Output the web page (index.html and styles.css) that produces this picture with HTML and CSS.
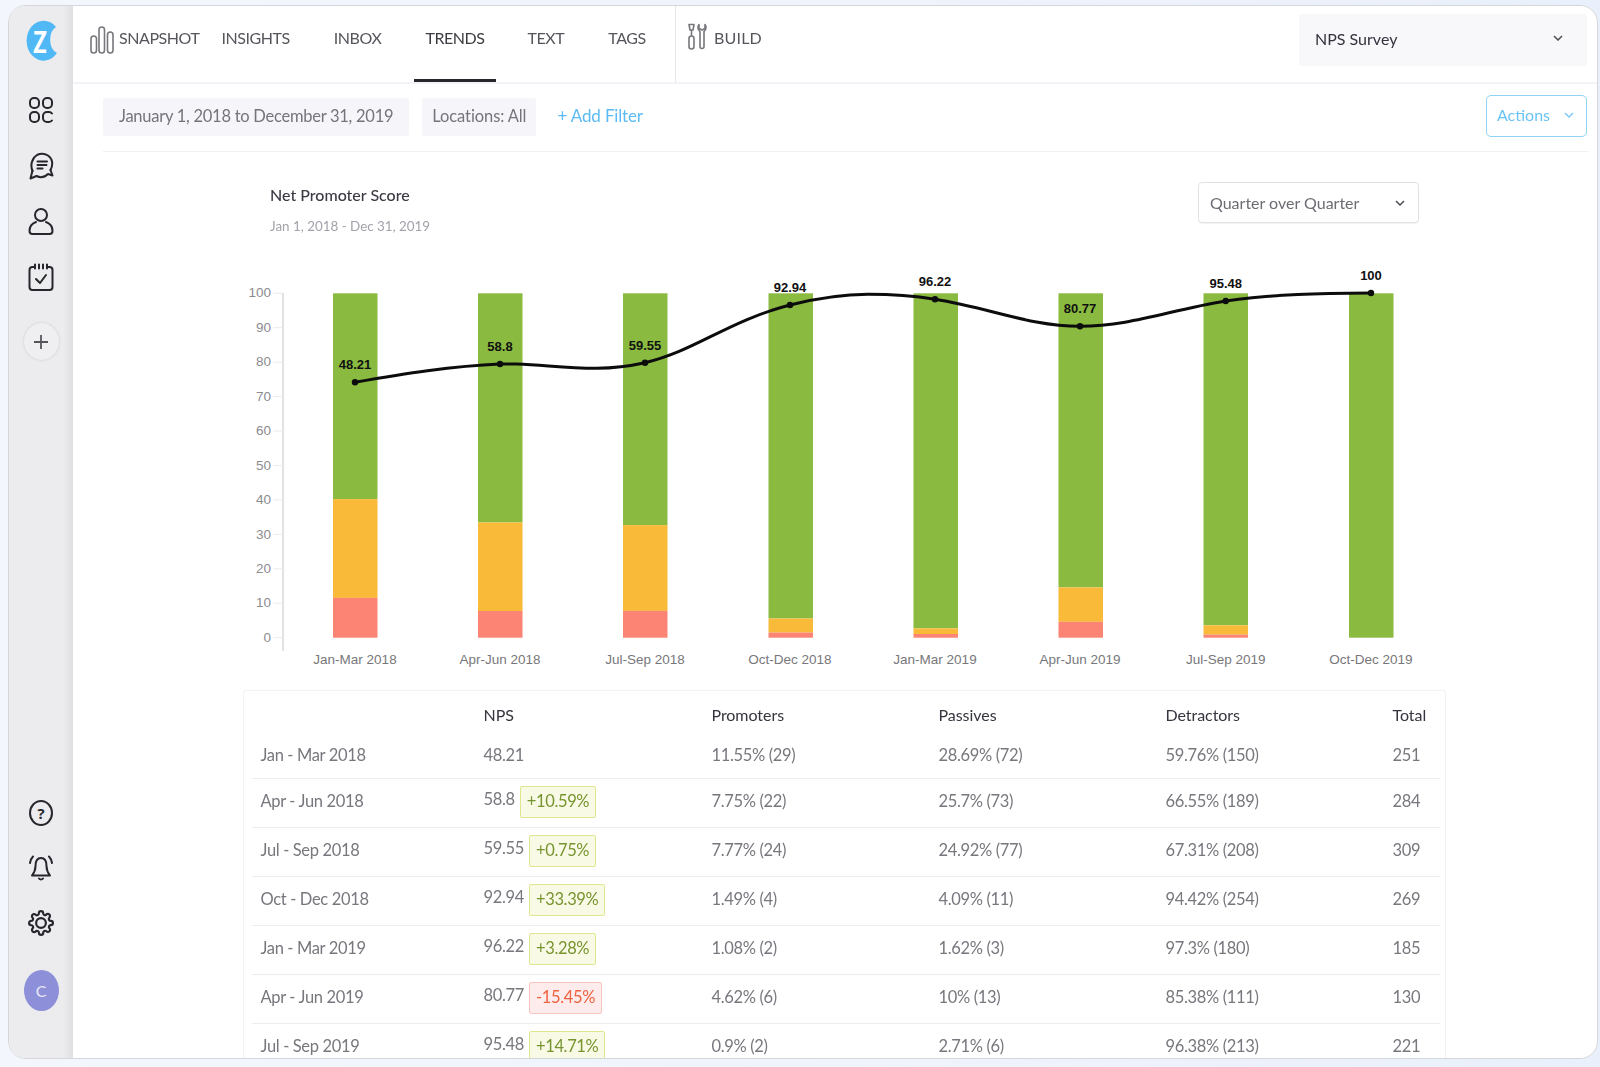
FILE: index.html
```html
<!DOCTYPE html>
<html lang="en">
<head>
<meta charset="utf-8">
<title>NPS Trends</title>
<link rel="stylesheet" href="styles.css">
</head>
<body>
<div class="window">
  <aside class="sidebar">
    <svg class="logo" viewBox="0 0 36 42" width="36" height="42">
      <path class="logo-c" d="M32 7A10 14 0 0 0 33 33A17 20 0 1 1 32 7Z"/>
      <text class="logo-z" transform="translate(16 33) scale(.72 1)" text-anchor="middle">Z</text>
    </svg>
    <div class="side-top">
      <svg class="ico" viewBox="0 0 26 28" width="26" height="28"><rect x="2" y="2" width="9" height="10" rx="4"/><rect x="15" y="2" width="9" height="10" rx="4"/><rect x="2" y="16" width="9" height="10" rx="4"/><path d="M24 17.500A4 4 0 0 0 21 16h-2a4 4 0 0 0-4 4v2a4 4 0 0 0 4 4h2a4 4 0 0 0 3-1.500"/></svg>
      <svg class="ico" viewBox="0 0 26 28" width="26" height="28"><path d="M4.500 19C2 13 4 6 9 3C15 0 22.500 3 24 9.500C24.500 12.500 24 15.500 22.500 18"/><path d="M4.500 18.500L2.500 26.500L8.500 24C12.500 26 17 25 20 22L24.500 23.500L22.500 18"/><path d="M9.500 9.500h9.500M9.500 13h9M9.500 16.500h5"/></svg>
      <svg class="ico" viewBox="0 0 26 28" width="26" height="28"><circle cx="13" cy="8" r="6"/><path d="M8 15C4 16.500 1.500 20 1.500 24Q1.500 27 4.500 27H21.500Q24.500 27 24.500 24C24.500 20 22 16.500 18 15"/></svg>
      <svg class="ico" viewBox="0 0 26 28" width="26" height="28"><path d="M19 4h2.500A3 3 0 0 1 24.500 7v17a3 3 0 0 1-3 3h-17a3 3 0 0 1-3-3V7a3 3 0 0 1 3-3H7"/><path d="M7 1.500v4M11 1.500v4M15 1.500v4M19 1.500v4"/><path d="M8 16l4 4 6-8"/></svg>
    </div>
    <div class="plus">
      <svg class="ico-thin" viewBox="0 0 16 16" width="16" height="16"><path d="M8 1v14M1 8h14"/></svg>
    </div>
    <div class="side-bottom">
      <div class="help"><span class="help-mark">?</span></div>
      <svg class="ico" viewBox="0 0 26 28" width="26" height="28"><path d="M13 4C8.500 4 7.500 8 7.500 12C7.500 17 6 19 4 21.500H22C20 19 18.500 17 18.500 12C18.500 8 17.500 4 13 4Z"/><path d="M11 24.500a2.500 2.500 0 0 0 4 0"/><path d="M5 2.500C3.500 4 2.500 6 2 9M21 2.500C22.500 4 23.500 6 24 9"/></svg>
      <svg class="ico" viewBox="0 0 24 24" width="26" height="26"><circle cx="12" cy="12" r="4.500"/><path d="M19.400 15a1.650 1.650 0 0 0 .33 1.820l.06.06a2 2 0 0 1 0 2.830 2 2 0 0 1-2.830 0l-.06-.06a1.650 1.650 0 0 0-1.820-.33 1.650 1.650 0 0 0-1 1.510V21a2 2 0 0 1-2 2 2 2 0 0 1-2-2v-.09A1.650 1.650 0 0 0 9 19.400a1.650 1.650 0 0 0-1.820.33l-.06.06a2 2 0 0 1-2.830 0 2 2 0 0 1 0-2.830l.06-.06a1.650 1.650 0 0 0 .33-1.820 1.650 1.650 0 0 0-1.510-1H3a2 2 0 0 1-2-2 2 2 0 0 1 2-2h.09A1.650 1.650 0 0 0 4.600 9a1.650 1.650 0 0 0-.33-1.820l-.06-.06a2 2 0 0 1 0-2.830 2 2 0 0 1 2.830 0l.06.06a1.650 1.650 0 0 0 1.820.33H9a1.650 1.650 0 0 0 1-1.510V3a2 2 0 0 1 2-2 2 2 0 0 1 2 2v.09a1.650 1.650 0 0 0 1 1.510 1.650 1.650 0 0 0 1.820-.33l.06-.06a2 2 0 0 1 2.830 0 2 2 0 0 1 0 2.830l-.06.06a1.650 1.650 0 0 0-.33 1.820V9a1.650 1.650 0 0 0 1.510 1H21a2 2 0 0 1 2 2 2 2 0 0 1-2 2h-.09a1.650 1.650 0 0 0-1.510 1z"/></svg>
      <div class="avatar">C</div>
    </div>
  </aside>

  <main class="main">
    <header class="topbar">
      <nav class="nav">
        <svg class="nav-ico" viewBox="0 0 24 28" width="24" height="28"><rect x="1" y="10" width="5.500" height="17" rx="2.750"/><rect x="9" y="1" width="5.500" height="26" rx="2.750"/><rect x="17.500" y="6" width="5.500" height="21" rx="2.750"/></svg>
        <a class="tab tab-snapshot">SNAPSHOT</a>
        <a class="tab tab-insights">INSIGHTS</a>
        <a class="tab tab-inbox">INBOX</a>
        <a class="tab tab-trends">TRENDS</a>
        <a class="tab tab-text">TEXT</a>
        <a class="tab tab-tags">TAGS</a>
      </nav>
      <div class="build">
        <svg class="nav-ico" viewBox="0 0 21 27" width="21" height="27"><rect x="2" y="13" width="5" height="13" rx="2.500"/><path d="M4.500 13V7M2 1.500h5L6 7H3Z"/><path d="M12 1.500C10.500 3 10.500 7 13 8.500V23.500a2 2 0 0 0 4 0V8.500C19.500 7 19.500 3 18 1.500V5.500L15 7L12 5.500Z"/></svg>
        <a class="tab tab-build">BUILD</a>
      </div>
      <div class="survey">
        <span>NPS Survey</span>
        <svg class="chev" viewBox="0 0 10 6" width="10" height="6"><path d="M1 1l4 4 4-4"/></svg>
      </div>
    </header>

    <section class="filters">
      <span class="chip chip-date">January 1, 2018 to December 31, 2019</span>
      <span class="chip chip-loc">Locations: All</span>
      <a class="add">+ Add Filter</a>
      <button class="actions">Actions<svg class="chev chev-blue" viewBox="0 0 10 6" width="10" height="6"><path d="M1 1l4 4 4-4"/></svg></button>
    </section>

    <section class="chart-head">
      <div>
        <h1 class="title">Net Promoter Score</h1>
        <p class="sub">Jan 1, 2018 - Dec 31, 2019</p>
      </div>
      <div class="period">
        <span>Quarter over Quarter</span>
        <svg class="chev" viewBox="0 0 10 6" width="10" height="6"><path d="M1 1l4 4 4-4"/></svg>
      </div>
    </section>

    <svg class="chart" viewBox="240 265 1210 420" width="1210" height="420">
      <path class="axis" d="M283 293V651"/>
      <path class="tick" d="M273 293.300h10M273 327.700h10M273 362.200h10M273 396.600h10M273 431h10M273 465.500h10M273 499.900h10M273 534.400h10M273 568.800h10M273 603.200h10M273 637.700h10"/>
      <g class="ylab">
        <text x="271" y="297">100</text><text x="271" y="332">90</text><text x="271" y="366">80</text><text x="271" y="401">70</text><text x="271" y="435">60</text><text x="271" y="470">50</text><text x="271" y="504">40</text><text x="271" y="539">30</text><text x="271" y="573">20</text><text x="271" y="607">10</text><text x="271" y="642">0</text>
      </g>
      <g class="green">
        <rect x="333" y="293.300" width="44.500" height="205.800"/><rect x="478" y="293.300" width="44.500" height="229.200"/><rect x="623" y="293.300" width="44.500" height="231.800"/><rect x="768.500" y="293.300" width="44.500" height="325.200"/><rect x="913.500" y="293.300" width="44.500" height="335.100"/><rect x="1058.500" y="293.300" width="44.500" height="294.100"/><rect x="1203.500" y="293.300" width="44.500" height="332"/><rect x="1349" y="293.300" width="44.500" height="344.400"/>
      </g>
      <g class="orange">
        <rect x="333" y="499.100" width="44.500" height="98.800"/><rect x="478" y="522.500" width="44.500" height="88.500"/><rect x="623" y="525.100" width="44.500" height="85.800"/><rect x="768.500" y="618.500" width="44.500" height="14.100"/><rect x="913.500" y="628.400" width="44.500" height="5.600"/><rect x="1058.500" y="587.400" width="44.500" height="34.400"/><rect x="1203.500" y="625.300" width="44.500" height="9.300"/>
      </g>
      <g class="red">
        <rect x="333" y="597.900" width="44.500" height="39.800"/><rect x="478" y="611" width="44.500" height="26.700"/><rect x="623" y="610.900" width="44.500" height="26.800"/><rect x="768.500" y="632.600" width="44.500" height="5.100"/><rect x="913.500" y="634" width="44.500" height="3.700"/><rect x="1058.500" y="621.800" width="44.500" height="15.900"/><rect x="1203.500" y="634.600" width="44.500" height="3.100"/>
      </g>
      <path class="line" d="M355 382.300C403 374 452 366 500 364C530 362.800 562 368.600 597 368.300C615 368.100 630 366 645 362.700C695 351 728 321 790 305C822 297 845 294.300 868 294.300C892 294.300 915 296 935 299.300C990 308 1030 326.300 1080 326.300C1130 326.300 1170 310 1225.700 301C1275 294 1320 293.300 1371 293"/>
      <g class="dots">
        <circle cx="355" cy="382.300" r="3.200"/><circle cx="500" cy="364" r="3.200"/><circle cx="645" cy="362.700" r="3.200"/><circle cx="790" cy="305" r="3.200"/><circle cx="935" cy="299.300" r="3.200"/><circle cx="1080" cy="326.300" r="3.200"/><circle cx="1225.700" cy="301" r="3.200"/><circle cx="1371" cy="293" r="3.200"/>
      </g>
      <g class="vals">
        <text x="355" y="369">48.21</text><text x="500" y="351">58.8</text><text x="645" y="350">59.55</text><text x="790" y="291.500">92.94</text><text x="935" y="286">96.22</text><text x="1080" y="313">80.77</text><text x="1225.700" y="287.500">95.48</text><text x="1371" y="280">100</text>
      </g>
      <g class="xlab">
        <text x="355" y="664">Jan-Mar 2018</text><text x="500" y="664">Apr-Jun 2018</text><text x="645" y="664">Jul-Sep 2018</text><text x="790" y="664">Oct-Dec 2018</text><text x="935" y="664">Jan-Mar 2019</text><text x="1080" y="664">Apr-Jun 2019</text><text x="1225.700" y="664">Jul-Sep 2019</text><text x="1371" y="664">Oct-Dec 2019</text>
      </g>
    </svg>

    <section class="table">
      <div class="row head"><span></span><span>NPS</span><span>Promoters</span><span>Passives</span><span>Detractors</span><span>Total</span></div>
      <div class="row first"><span>Jan - Mar 2018</span><span class="nps">48.21</span><span>11.55% (29)</span><span>28.69% (72)</span><span>59.76% (150)</span><span>251</span></div>
      <div class="row"><span>Apr - Jun 2018</span><span class="nps"><i class="val">58.8</i><b class="up">+10.59%</b></span><span>7.75% (22)</span><span>25.7% (73)</span><span>66.55% (189)</span><span>284</span></div>
      <div class="row"><span>Jul - Sep 2018</span><span class="nps"><i class="val">59.55</i><b class="up">+0.75%</b></span><span>7.77% (24)</span><span>24.92% (77)</span><span>67.31% (208)</span><span>309</span></div>
      <div class="row"><span>Oct - Dec 2018</span><span class="nps"><i class="val">92.94</i><b class="up">+33.39%</b></span><span>1.49% (4)</span><span>4.09% (11)</span><span>94.42% (254)</span><span>269</span></div>
      <div class="row"><span>Jan - Mar 2019</span><span class="nps"><i class="val">96.22</i><b class="up">+3.28%</b></span><span>1.08% (2)</span><span>1.62% (3)</span><span>97.3% (180)</span><span>185</span></div>
      <div class="row"><span>Apr - Jun 2019</span><span class="nps"><i class="val">80.77</i><b class="down">-15.45%</b></span><span>4.62% (6)</span><span>10% (13)</span><span>85.38% (111)</span><span>130</span></div>
      <div class="row"><span>Jul - Sep 2019</span><span class="nps"><i class="val">95.48</i><b class="up">+14.71%</b></span><span>0.9% (2)</span><span>2.71% (6)</span><span>96.38% (213)</span><span>221</span></div>
    </section>
  </main>
</div>
</body>
</html>
```
FILE: styles.css
```css
* { box-sizing: border-box; }
html, body { margin: 0; height: 100%; }
body {
  background: linear-gradient(90deg, #f3f7fd, #eaf0fb);
  font-family: Lato, "Open Sans", sans-serif;
  color: #6f6f76;
  overflow: hidden;
}
.window {
  display: flex;
  height: 1054px;
  margin: 5px 2px 0 8px;
  background: #fff;
  border: 1.5px solid #d5d6da;
  border-radius: 18px;
  overflow: hidden;
  filter: blur(.35px);
}

/* sidebar */
.sidebar {
  flex: 0 0 64px;
  display: flex;
  flex-direction: column;
  align-items: center;
  padding-top: 14px;
  background: linear-gradient(90deg, #ecebee 85%, #dfdee2);
}
.logo { display: block; margin: 0 0 34px 2px; }
.logo-c { fill: #50b8f5; }
.logo-z { fill: #fff; font: 900 31px Lato, sans-serif; }
.ico { display: block; fill: none; stroke: #26262c; stroke-width: 2; stroke-linecap: round; stroke-linejoin: round; }
.ico-thin { display: block; fill: none; stroke: #55555c; stroke-width: 1.8; }
.side-top { display: flex; flex-direction: column; align-items: center; gap: 27.700px; }
.plus {
  display: flex; align-items: center; justify-content: center;
  width: 35px; height: 37px; margin-top: 32px;
  background: #efeef1; border-radius: 50%;
  box-shadow: 0 0 3px rgba(0,0,0,.14);
}
.side-bottom {
  margin-top: auto; margin-bottom: 47px;
  display: flex; flex-direction: column; align-items: center; gap: 28px;
}
.help {
  display: flex; align-items: center; justify-content: center;
  width: 24px; height: 26px; border: 2px solid #26262c; border-radius: 50%;
}
.help-mark { font: 700 15px "Open Sans", sans-serif; color: #26262c; }
.avatar {
  display: flex; align-items: center; justify-content: center;
  width: 35px; height: 41px; margin-top: 6px; border-radius: 50%;
  background: #8d90d8; color: #e8e8f8; font-size: 16px;
}

/* top bar */
.main { flex: 1; min-width: 0; display: flex; flex-direction: column; }
.topbar {
  flex: 0 0 76px; display: flex; align-items: flex-start;
  border-bottom: 2px solid #f3f2f6;
}
.nav { display: flex; align-items: flex-start; width: 603px; height: 76px; padding-left: 17px; border-right: 1.5px solid #e6e6e9; }
.nav-ico { flex: none; margin-top: 20px; fill: none; stroke: #77777c; stroke-width: 1.6; stroke-linejoin: round; }
.tab {
  display: block; height: 76px; padding-top: 21px;
  font-size: 16px; line-height: 22px; color: #55555c; letter-spacing: -.44px;
}
.tab-snapshot { margin-left: 5px; }
.tab-insights { margin-left: 22px; }
.tab-inbox { margin-left: 44px; }
.tab-trends { margin-left: 33px; padding-inline: 11px; color: #3b3b41; border-bottom: 3px solid #26262c; }
.tab-text { margin-left: 32px; }
.tab-tags { margin-left: 44px; }
.build { display: flex; gap: 6px; height: 76px; padding-left: 11px; width: 623px; }
.build .nav-ico { margin-top: 17px; }
.tab-build { letter-spacing: .2px; }
.survey {
  display: flex; align-items: center; justify-content: space-between;
  width: 288px; height: 52px; margin-top: 8px; padding: 0 24px 4px 16px;
  background: #f8f7f9; border-radius: 3px; color: #33333d; font-size: 16px;
}
.chev { fill: none; stroke: #4d4d55; stroke-width: 1.5; flex: none; }
.chev-blue { stroke: #7fcbf6; margin-left: 14px; }

/* filters */
.filters {
  flex: 0 0 68px; display: flex; align-items: flex-start;
  margin: 0 9px 0 30px; padding-top: 14px;
  border-bottom: 1.5px solid #f1f1f4;
}
.chip {
  display: block; height: 38px; padding: 0 16px; line-height: 36px;
  background: #f5f5fa; border-radius: 3px; font-size: 16.500px; color: #74747c;
}
.chip-date { letter-spacing: -.26px; }
.chip-loc { margin-left: 13px; padding: 0 10px; letter-spacing: -.1px; }
.add { margin-left: 21px; font-size: 17px; line-height: 36px; color: #5cbaf4; letter-spacing: -.15px; }
.actions {
  margin: -3px 1px 0 auto;
  display: flex; align-items: center;
  width: 101px; height: 42px; padding: 0 10px 3px;
  background: #fff; border: 1.5px solid #8fd3f7; border-radius: 5px;
  font: 16px Lato, sans-serif; color: #6cc3f5;
}

/* chart */
.chart-head {
  flex: none;
  display: flex; justify-content: space-between; align-items: flex-start;
  height: 112.500px; padding: 30px 178px 0 197px;
}
.title { margin: 0; font-size: 16px; font-weight: 500; line-height: 26px; color: #3a3a44; }
.sub { margin: 8px 0 0; font-size: 13.400px; line-height: 20px; color: #a2a2aa; }
.period {
  display: flex; align-items: center; justify-content: space-between;
  width: 221px; height: 41px; padding: 0 13px 0 11px;
  border: 1.5px solid #e2e2e5; border-radius: 4px; color: #6c6c74; font-size: 16px;
  box-shadow: 0 1px 1px rgba(0,0,0,.05);
}
.chart { display: block; flex: none; margin-left: 167px; }
.chart text { font-family: "Liberation Sans", Arial, sans-serif; }
.axis { stroke: #cfcfd2; stroke-width: 1.2; fill: none; }
.tick { stroke: #ececee; stroke-width: 1; fill: none; }
.ylab { font-size: 13.500px; fill: #8c8c8f; text-anchor: end; }
.xlab { font-size: 13.500px; fill: #77777b; text-anchor: middle; }
.vals { font-size: 13px; font-weight: 700; fill: #111; text-anchor: middle; }
.green { fill: #8abb40; }
.orange { fill: #f9ba39; }
.red { fill: #fb8474; }
.line { fill: none; stroke: #0c0c0c; stroke-width: 3; stroke-linecap: round; }
.dots { fill: #0c0c0c; }

/* table */
.table {
  flex: none; margin: 5px 0 0 169.500px; width: 1203px;
  padding: 0 5px 0 8px;
  border: 1.5px solid #f2f2f4; border-bottom: 0;
  border-radius: 3px 3px 0 0;
}
.row {
  display: grid; grid-template-columns: 223px 228px 227px 227px 227px 1fr;
  align-items: center;
  height: 49px; padding: 0 0 4px 9px;
  border-bottom: 1.5px solid #ececef;
  font-size: 16.500px; letter-spacing: -.35px; color: #77777e;
}
.head { height: 38px; padding: 10px 0 0 9px; border-bottom: 0; color: #35353f; font-size: 16px; letter-spacing: -.05px; }
.first { height: 50px; padding: 3px 0 0 9px; }
.nps { display: flex; align-items: center; gap: 5px; }
.val { font-style: normal; margin-top: -4px; }
.up, .down {
  display: block; height: 32px; margin-top: 2px; padding: 0 6px; line-height: 29px;
  font-weight: 400; border-radius: 2px; border: 1.5px solid;
}
.up { background: #f8fae6; border-color: #dfe68e; color: #78942f; }
.down { background: #fdeceb; border-color: #f8c4bf; color: #ef6240; }
```
